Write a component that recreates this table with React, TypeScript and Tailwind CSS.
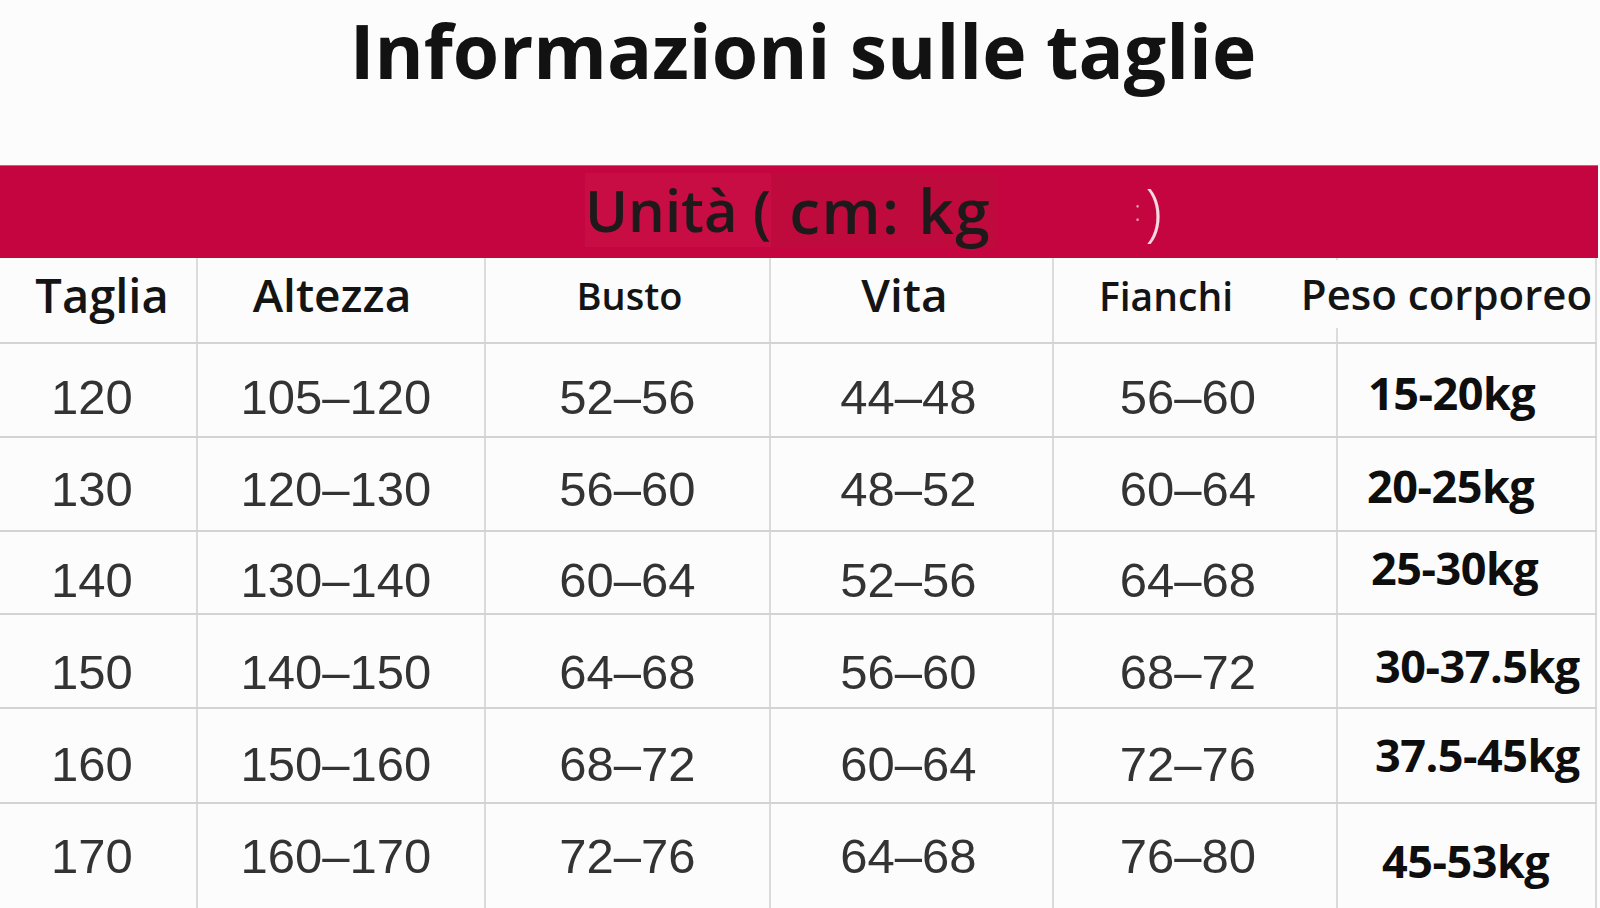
import React from "react";

const colPad = ["pr-[12px]", "pr-[10px]", "", "pr-[6px]", "pr-[14px]"];

const rows = [
  { c: ["120", "105–120", "52–56", "44–48", "56–60"], w: "15-20kg", h: "h-[94px]", np: "pt-[15px]", wp: "pt-[5px] pl-[30px]" },
  { c: ["130", "120–130", "56–60", "48–52", "60–64"], w: "20-25kg", h: "h-[94px]", np: "pt-[11px]", wp: "pt-[3px] pl-[29px]" },
  { c: ["140", "130–140", "60–64", "52–56", "64–68"], w: "25-30kg", h: "h-[83px]", np: "pt-[15px]", wp: "pb-[10px] pl-[33px]" },
  { c: ["150", "140–150", "64–68", "56–60", "68–72"], w: "30-37.5kg", h: "h-[94px]", np: "pt-[22px]", wp: "pt-[9px] pl-[37px]" },
  { c: ["160", "150–160", "68–72", "60–64", "72–76"], w: "37.5-45kg", h: "h-[95px]", np: "pt-[18px]", wp: "pb-[2px] pl-[37px]" },
  { c: ["170", "160–170", "72–76", "64–68", "76–80"], w: "45-53kg", h: "h-[106px]", np: "pt-[0px]", wp: "pt-[8px] pl-[44px]" },
];

const grid = "grid grid-cols-[196px_288px_285px_283px_284px_261px] w-[1597px]";

export default function App() {
  return (
    <div
      className="w-[1600px] h-[908px] overflow-hidden bg-[#fcfcfc] text-[#141414]"
      style={{ fontFamily: '"Open Sans", "Noto Sans", sans-serif' }}
    >
      {/* Title */}
      <div className="h-[165px] pt-[13px] flex justify-center">
        <h1 className="text-[75px] leading-none font-bold text-[#121212] pl-[6px]">
          Informazioni sulle taglie
        </h1>
      </div>

      {/* Unit bar */}
      <div className="h-[93px] w-[1598px] bg-[#c4053f] border-t border-[#d9587c] flex items-center pl-[585px] pb-[4px]">
        <div className="w-[549px] flex items-center leading-none font-semibold text-[#1e1a1b] whitespace-nowrap">
          <span className="bg-[#c70d43] py-[8px] text-[58px]">Unità (</span>
          <span className="bg-[#bf0a3d] py-[6px] pl-[18px] pr-[6px] text-[62px] tracking-[1.5px]">cm: kg</span>
        </div>
        <div className="flex items-center leading-none text-[62px] font-light text-white/85 whitespace-nowrap">
          <span className="text-[30px] text-white/60 mr-[4px]">:</span>
          <span>)</span>
        </div>
      </div>

      {/* Header row */}
      <div className={`${grid} h-[84px]`}>
        <div className="flex items-center justify-center pl-[8px] pb-[10px] text-[47px] leading-none font-semibold">Taglia</div>
        <div className="flex items-center justify-center pr-[18px] pb-[12px] border-l-2 border-[#dcdcdc] text-[46px] leading-none font-semibold">Altezza</div>
        <div className="flex items-center justify-center pl-[4px] pb-[10px] border-l-2 border-[#dcdcdc] text-[38px] leading-none font-semibold">Busto</div>
        <div className="flex items-center justify-center pr-[14px] pb-[12px] border-l-2 border-[#dcdcdc] text-[46px] leading-none font-semibold">Vita</div>
        <div className="flex items-center justify-center pr-[58px] pb-[10px] border-l-2 border-[#dcdcdc] text-[39px] leading-none font-semibold">Fianchi</div>
        <div className="flex items-center justify-center pr-[40px] pb-[12px] border-l-2 border-r-2 border-[#dcdcdc] whitespace-nowrap">
          <span className="relative bg-[#fcfcfc] text-[42px] leading-[68px] font-semibold">Peso corporeo</span>
        </div>
      </div>

      {/* Data rows */}
      {rows.map((r, i) => (
        <div key={i} className={`${grid} ${r.h} border-t-2 border-[#d3d3d3]`}>
          {r.c.map((v, j) => (
            <div
              key={j}
              className={`flex items-center justify-center ${colPad[j]} ${r.np} ${j > 0 ? "border-l-2 border-[#dadada]" : ""} text-[49px] leading-none text-[#333333]`}
              style={{ fontFamily: '"Liberation Sans", Arial, sans-serif' }}
            >
              {v}
            </div>
          ))}
          <div
            className={`flex items-center justify-start ${r.wp} border-l-2 border-r-2 border-[#dadada] text-[45px] leading-none font-bold text-[#0e0e0e] whitespace-nowrap tracking-[-0.5px]`}
          >
            {r.w}
          </div>
        </div>
      ))}
    </div>
  );
}
